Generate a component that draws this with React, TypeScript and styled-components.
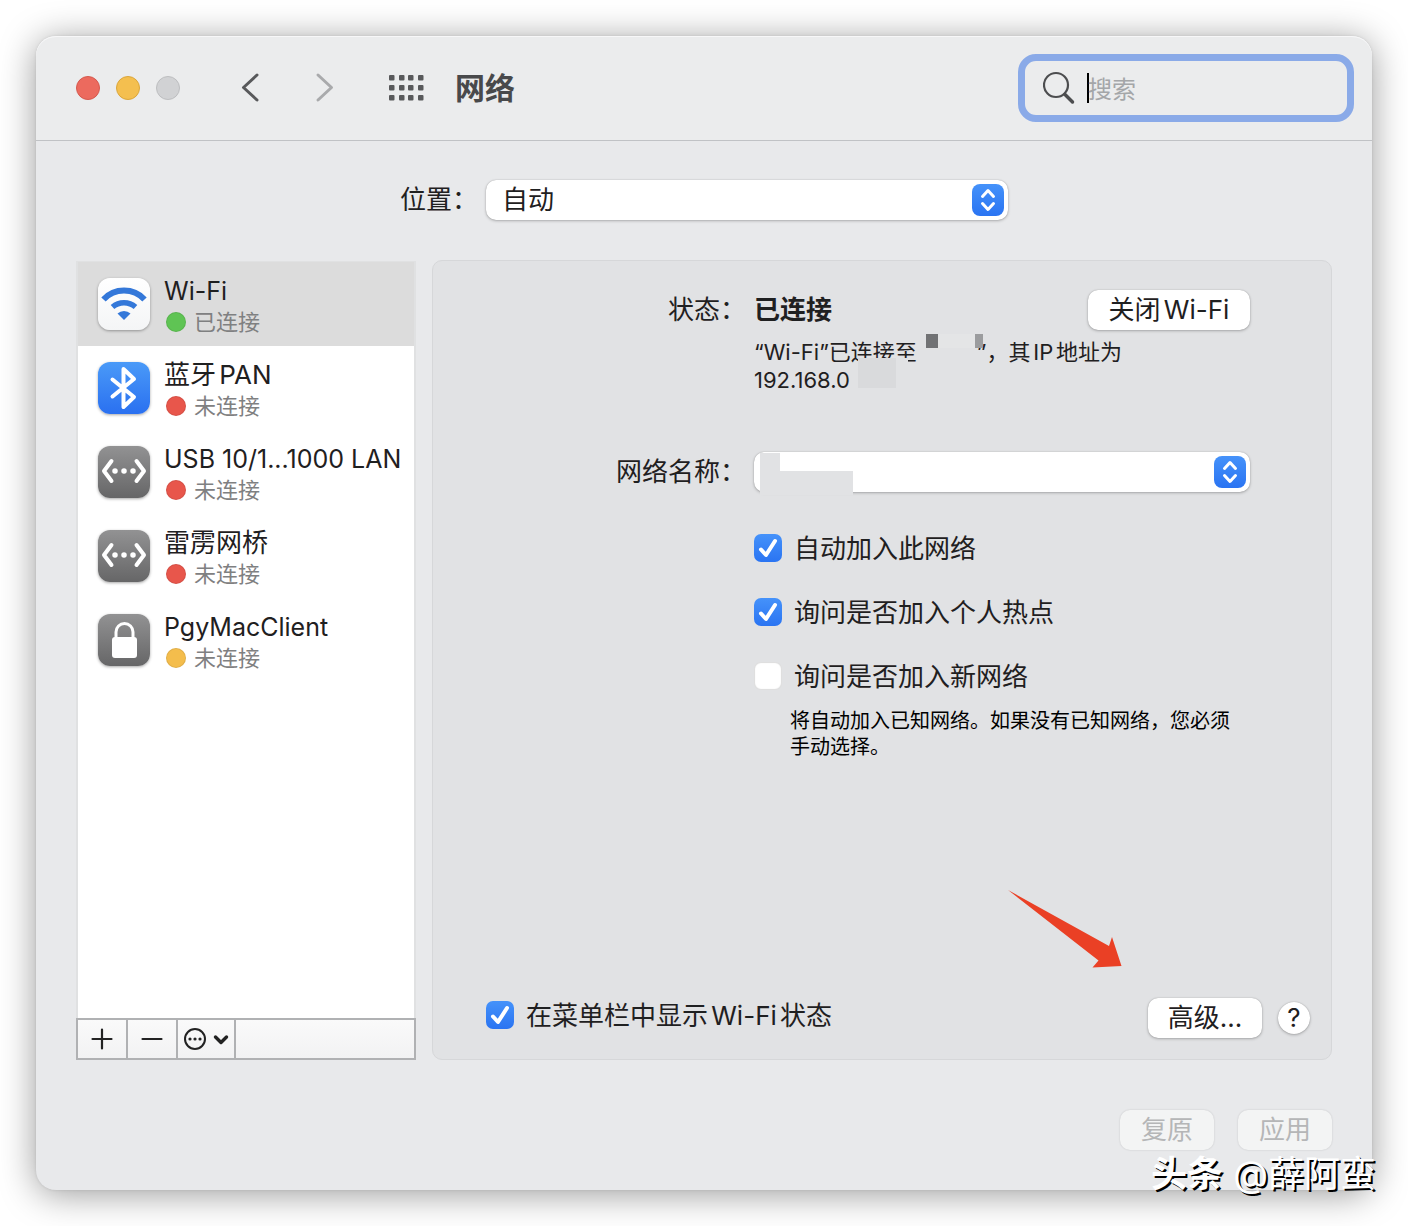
import React from "react";
import styled, { createGlobalStyle, css } from "styled-components";

const Global = createGlobalStyle`
  *, *::before, *::after { box-sizing: border-box; }
  body {
    margin: 0;
    background: #fff;
    color: #1f2021;
    font-family: Inter, "Noto Sans CJK SC", sans-serif;
    font-size: 26px;
    line-height: 36px;
    text-autospace: normal;
  }
  button, input, select { font: inherit; color: inherit; margin: 0; }
`;

const Page = styled.div`
  position: relative;
  padding: 36px;
`;

const Window = styled.main`
  border-radius: 20px;
  background: #e8e9eb;
  box-shadow: 0 0 3px rgba(0, 0, 0, 0.1), 0 4px 36px rgba(0, 0, 0, 0.4);
`;

const TitleBar = styled.header`
  display: flex;
  align-items: center;
  height: 105px;
  padding: 0 18px 0 40px;
  border-bottom: 1px solid #c0c2c5;
  border-radius: 20px 20px 0 0;
  background: #ebeced;
  box-shadow: inset 0 1px 0 #f7f7f8;
`;

const Lights = styled.div`
  display: flex;
  gap: 16px;
  margin-right: 60px;
`;

const Light = styled.button<{ $color: string; $edge: string }>`
  width: 24px;
  height: 24px;
  padding: 0;
  border: 1px solid ${(p) => p.$edge};
  border-radius: 50%;
  background: ${(p) => p.$color};
`;

const IconButton = styled.button<{ $color: string }>`
  display: flex;
  padding: 0;
  border: 0;
  background: none;
  color: ${(p) => p.$color};
`;

const NavButtons = styled.div`
  display: flex;
  gap: 55px;
  margin-right: 53px;
`;

const Title = styled.h1`
  margin: 0 auto 0 30px;
  font-size: 30px;
  font-weight: 700;
  color: #48494b;
`;

const SearchBox = styled.label`
  display: flex;
  align-items: center;
  gap: 12px;
  width: 336px;
  height: 68px;
  padding: 0 17px 0 18px;
  border: 7px solid #8aaae8;
  border-radius: 18px;
  color: #4c4d4f;
`;

const SearchInput = styled.input`
  flex: 1;
  min-width: 0;
  padding: 3px 0 0;
  border: 0;
  outline: 0;
  background: none;
  font-size: 24px;
  &::placeholder { color: #a4a6a8; opacity: 1; }
`;

const Caret = styled.span`
  width: 2px;
  height: 30px;
  margin-right: -13px;
  background: #000;
`;

const Body = styled.div`
  padding: 39px 40px 40px;
`;

const LocationRow = styled.div`
  display: flex;
  justify-content: center;
  align-items: center;
  gap: 8px;
  margin-bottom: 40px;
`;

const PopUp = styled.div<{ $width: string }>`
  position: relative;
  width: ${(p) => p.$width};
`;

const surface = css`
  background: #fff;
  border: 0;
  border-radius: 10px;
  box-shadow: 0 0 1px rgba(0, 0, 0, 0.3), 0 1px 3px rgba(0, 0, 0, 0.25);
`;

const Select = styled.select`
  ${surface}
  display: block;
  appearance: none;
  width: 100%;
  height: 40px;
  padding: 0 48px 0 16px;
`;

const Stepper = styled.span`
  position: absolute;
  top: 4px;
  right: 4px;
  display: flex;
  width: 32px;
  height: 32px;
  border-radius: 8px;
  background: linear-gradient(#4592fa, #2a74f2);
  pointer-events: none;
`;

const Columns = styled.div`
  display: flex;
  gap: 16px;
`;

const Sidebar = styled.aside`
  display: flex;
  flex-direction: column;
  flex: 0 0 340px;
  padding-top: 1px;
`;

const ServiceList = styled.ul`
  flex: 1;
  margin: 0;
  padding: 0;
  list-style: none;
  background: #fff;
  border: 1px solid #e0e1e2;
  border-width: 1px 2px 0;
`;

const Service = styled.li<{ $selected?: boolean }>`
  display: flex;
  gap: 14px;
  height: 84px;
  padding: 12px 0 0 20px;
  white-space: nowrap;
  background: ${(p) => (p.$selected ? "#dcdcdc" : "transparent")};
`;

const Tile = styled.span<{ $fill: string }>`
  display: flex;
  flex: none;
  width: 52px;
  height: 52px;
  margin-top: 4px;
  border-radius: 12px;
  background: ${(p) => p.$fill};
  box-shadow: 0 1px 3px rgba(0, 0, 0, 0.35);
`;

const ServiceName = styled.div`
  font-size: 25px;
  line-height: 34px;
  &:lang(zh) { font-size: 26px; }
`;

const ServiceState = styled.div`
  display: flex;
  align-items: center;
  gap: 8px;
  padding-left: 2px;
  font-size: 22px;
  line-height: 28px;
  color: #7f8081;
`;

const Dot = styled.span<{ $color: string }>`
  width: 20px;
  height: 20px;
  border: 1px solid rgba(0, 0, 0, 0.08);
  border-radius: 50%;
  background: ${(p) => p.$color};
`;

const ListTools = styled.div`
  display: flex;
  height: 42px;
  border: 2px solid #b0b1b3;
  background: linear-gradient(#fafafa, #f2f2f3);
`;

const ListTool = styled.button<{ $width: number }>`
  display: flex;
  align-items: center;
  justify-content: center;
  width: ${(p) => p.$width}px;
  padding: 0;
  border: 0;
  border-right: 2px solid #b0b1b3;
  background: none;
`;

const Panel = styled.section`
  position: relative;
  display: flex;
  flex-direction: column;
  flex: 1;
  min-width: 0;
  min-height: 800px;
  padding: 29px 21px 21px 20px;
  border: 1px solid #d6d7d9;
  border-radius: 10px;
  background: #e1e2e4;
`;

const Form = styled.div`
  display: grid;
  grid-template-columns: 293px 1fr;
  column-gap: 8px;
  padding-right: 60px;
`;

const FormLabel = styled.label`
  padding-top: 2px;
  text-align: right;
  white-space: nowrap;
`;

const StatusLine = styled.div`
  display: flex;
  justify-content: space-between;
  align-items: center;
`;

const PushButton = styled.button<{ $width: number }>`
  ${surface}
  width: ${(p) => p.$width}px;
  height: 40px;
  padding: 0;
  white-space: nowrap;
  &:disabled {
    background: #f3f4f4;
    color: #b5b6b7;
    box-shadow: 0 0 2px rgba(0, 0, 0, 0.16);
  }
`;

const StatusDetail = styled.p`
  position: relative;
  margin: 8px 0 58px;
  font-size: 22px;
  line-height: 28px;
`;

const HiddenName = styled.span`
  display: inline-block;
  width: 60px;
`;

const Mask = styled.span<{ $x: number; $y: number; $w: number; $h: number; $color: string }>`
  position: absolute;
  left: ${(p) => p.$x}px;
  top: ${(p) => p.$y}px;
  width: ${(p) => p.$w}px;
  height: ${(p) => p.$h}px;
  background: ${(p) => p.$color};
`;

const Options = styled.div`
  grid-column: 2;
  display: flex;
  flex-direction: column;
  gap: 30px;
  margin-top: 39px;
`;

const CheckLabel = styled.label`
  display: flex;
  align-items: center;
  gap: 12px;
  line-height: 32px;
  white-space: nowrap;
`;

const CheckText = styled.span`
  padding-top: 2px;
`;

const CheckBox = styled.span`
  position: relative;
  display: flex;
  width: 28px;
  height: 28px;
  svg { position: absolute; inset: 0; pointer-events: none; }
`;

const CheckInput = styled.input`
  appearance: none;
  width: 28px;
  height: 28px;
  border-radius: 7px;
  background: #fff;
  box-shadow: inset 0 0 1px 1px rgba(0, 0, 0, 0.14);
  &:checked {
    background: linear-gradient(#4592fa, #2a74f2);
    box-shadow: none;
  }
`;

const Hint = styled.p`
  grid-column: 2;
  margin: 15px 0 0 36px;
  padding-right: 10px;
  font-size: 20px;
  line-height: 26px;
  color: #000;
`;

const PanelFooter = styled.div`
  display: flex;
  align-items: flex-start;
  gap: 16px;
  margin-top: auto;
  padding-left: 33px;
`;

const FooterButtons = styled.div`
  display: flex;
  align-items: center;
  gap: 16px;
  margin-left: auto;
`;

const HelpButton = styled.button`
  ${surface}
  width: 32px;
  height: 32px;
  padding: 0;
  border-radius: 50%;
  line-height: 32px;
`;

const Arrow = styled.svg`
  position: absolute;
  right: 209px;
  bottom: 91px;
`;

const Actions = styled.footer`
  display: flex;
  justify-content: flex-end;
  gap: 24px;
  margin-top: 50px;
`;

const Watermark = styled.div`
  position: absolute;
  right: 32px;
  bottom: 30px;
  font-size: 36px;
  line-height: 44px;
  white-space: nowrap;
  color: #fff;
  text-shadow: 2px 2px 0 #000;
`;

const UpDown = () => (
  <Stepper>
    <svg width="32" height="32" viewBox="0 0 32 32" fill="none" stroke="#fff" strokeWidth="3" strokeLinecap="round" strokeLinejoin="round">
      <path d="M10.5 12.5 16 6.500l5.500 6M10.500 19.500l5.500 6 5.500-6" />
    </svg>
  </Stepper>
);

const Check = ({ label, checked }: { label: string; checked?: boolean }) => {
  const [on, setOn] = React.useState(!!checked);
  return (
    <CheckLabel>
      <CheckBox>
        <CheckInput type="checkbox" checked={on} onChange={() => setOn(!on)} />
        {on && (
          <svg width="28" height="28" viewBox="0 0 28 28" fill="none" stroke="#fff" strokeWidth="4" strokeLinecap="round" strokeLinejoin="round">
            <path d="M7 15.500l5 5.500L21 7" />
          </svg>
        )}
      </CheckBox>
      <CheckText>{label}</CheckText>
    </CheckLabel>
  );
};

const GREY = "linear-gradient(#929293, #666667)";

const WifiGlyph = () => (
  <svg width="52" height="52" viewBox="0 0 52 52" fill="none" stroke="#3478d9">
    <path d="M5.500 21.500a28 28 0 0 1 41 0" strokeWidth="6" />
    <path d="M14.500 29a17.500 17.500 0 0 1 23 0" strokeWidth="5.500" />
    <path d="M26 42l-6.500-6.500a9.500 9.500 0 0 1 13 0z" fill="#3478d9" stroke="none" />
  </svg>
);

const BluetoothGlyph = () => (
  <svg width="52" height="52" viewBox="0 0 52 52" fill="none" stroke="#fff" strokeWidth="4" strokeLinecap="round" strokeLinejoin="round">
    <path d="M14.500 17.500 36 35 25.500 45V7L36 17 14.500 34.500" />
  </svg>
);

const EthernetGlyph = () => (
  <svg width="52" height="52" viewBox="0 0 52 52" fill="none" stroke="#fff" strokeWidth="4" strokeLinecap="round" strokeLinejoin="round">
    <path d="M13.500 15 6 25l7.500 10M38.500 15 46 25l-7.500 10" />
    <path d="M17 25h.01M26 25h.01M35 25h.01" strokeWidth="5.500" />
  </svg>
);

const LockGlyph = () => (
  <svg width="52" height="52" viewBox="0 0 52 52" fill="none">
    <rect x="14" y="23" width="25" height="21" rx="3" fill="#fff" />
    <path d="M18 25v-7a8.500 8.500 0 0 1 17 0v7" stroke="#fff" strokeWidth="3" />
  </svg>
);

const services = [
  { name: "Wi-Fi", lang: "en", state: "已连接", color: "#5fc454", fill: "linear-gradient(#fff, #f4f5f6)", glyph: <WifiGlyph />, selected: true },
  { name: "蓝牙PAN", lang: "zh", state: "未连接", color: "#e8564b", fill: "linear-gradient(#4a9af8, #2a70f0)", glyph: <BluetoothGlyph /> },
  { name: "USB 10/1...1000 LAN", lang: "en", state: "未连接", color: "#e8564b", fill: GREY, glyph: <EthernetGlyph /> },
  { name: "雷雳网桥", lang: "zh", state: "未连接", color: "#e8564b", fill: GREY, glyph: <EthernetGlyph /> },
  { name: "PgyMacClient", lang: "en", state: "未连接", color: "#f4bd4c", fill: GREY, glyph: <LockGlyph /> },
];

export default function App() {
  return (
    <Page>
      <Global />
      <Window>
        <TitleBar>
          <Lights>
            <Light aria-label="关闭" $color="#ec6a5e" $edge="#d5594e" />
            <Light aria-label="最小化" $color="#f4bf4f" $edge="#dba63b" />
            <Light aria-label="缩放" $color="#d1d2d4" $edge="#bdbec0" />
          </Lights>
          <NavButtons>
            <IconButton aria-label="后退" $color="#58595b">
              <svg width="20" height="32" viewBox="0 0 20 32" fill="none" stroke="currentColor" strokeWidth="3" strokeLinecap="round" strokeLinejoin="round">
                <path d="M17 3 3.500 15.500 17 28" />
              </svg>
            </IconButton>
            <IconButton aria-label="前进" $color="#a9aaac">
              <svg width="20" height="32" viewBox="0 0 20 32" fill="none" stroke="currentColor" strokeWidth="3" strokeLinecap="round" strokeLinejoin="round">
                <path d="M3 3l13.500 12.500L3 28" />
              </svg>
            </IconButton>
          </NavButtons>
          <IconButton aria-label="显示全部" $color="#58595b">
            <svg width="37" height="26" viewBox="0 0 37 26" fill="currentColor">
              {[0, 10, 20].map((y) =>
                [1, 11, 20, 30].map((x) => <rect key={`${x}-${y}`} x={x} y={y} width="5.500" height="5.500" rx="1" />)
              )}
            </svg>
          </IconButton>
          <Title>网络</Title>
          <SearchBox>
            <svg width="32" height="34" viewBox="0 0 32 34" fill="none" stroke="currentColor" strokeLinecap="round">
              <circle cx="13" cy="14" r="12" strokeWidth="2.200" />
              <path d="M22 23.500l7.500 7.500" strokeWidth="3.500" />
            </svg>
            <Caret />
            <SearchInput type="search" aria-label="搜索" placeholder="搜索" />
          </SearchBox>
        </TitleBar>

        <Body>
          <LocationRow>
            <label htmlFor="location">位置：</label>
            <PopUp $width="522px">
              <Select id="location"><option>自动</option></Select>
              <UpDown />
            </PopUp>
          </LocationRow>

          <Columns>
            <Sidebar>
              <ServiceList>
                {services.map((s) => (
                  <Service key={s.name} $selected={s.selected}>
                    <Tile $fill={s.fill}>{s.glyph}</Tile>
                    <div>
                      <ServiceName lang={s.lang}>{s.name}</ServiceName>
                      <ServiceState><Dot $color={s.color} />{s.state}</ServiceState>
                    </div>
                  </Service>
                ))}
              </ServiceList>
              <ListTools>
                <ListTool $width={50} aria-label="添加">
                  <svg width="22" height="22" viewBox="0 0 22 22" stroke="#222" strokeWidth="2.200" strokeLinecap="round"><path d="M1.500 11h19M11 1.500v19" /></svg>
                </ListTool>
                <ListTool $width={50} aria-label="移除">
                  <svg width="22" height="22" viewBox="0 0 22 22" stroke="#222" strokeWidth="2.200" strokeLinecap="round"><path d="M1.500 11h19" /></svg>
                </ListTool>
                <ListTool $width={58} aria-label="更多">
                  <svg width="46" height="24" viewBox="0 0 46 24" fill="none" stroke="#222" strokeLinecap="round" strokeLinejoin="round">
                    <circle cx="12" cy="12" r="10" strokeWidth="2" />
                    <path d="M7 12h.01M12 12h.01M17 12h.01" strokeWidth="3.200" />
                    <path d="M32.500 10l5.500 5.500 5.500-5.500" strokeWidth="3.400" />
                  </svg>
                </ListTool>
              </ListTools>
            </Sidebar>

            <Panel>
              <Form>
                <FormLabel as="span">状态：</FormLabel>
                <div>
                  <StatusLine>
                    <strong>已连接</strong>
                    <PushButton $width={162}>关闭Wi-Fi</PushButton>
                  </StatusLine>
                  <StatusDetail>
                    “Wi-Fi”已连接至<HiddenName />”，其IP地址为<br />
                    192.168.0
                    <Mask $x={104} $y={20} $w={50} $h={30} $color="#e1e2e4" />
                    <Mask $x={104} $y={20} $w={38} $h={30} $color="#d9dadc" />
                    <Mask $x={172} $y={-4} $w={12} $h={14} $color="#717274" />
                    <Mask $x={184} $y={-4} $w={38} $h={14} $color="#e4e5e6" />
                    <Mask $x={221} $y={-4} $w={8} $h={14} $color="#9b9c9e" />
                  </StatusDetail>
                </div>

                <FormLabel htmlFor="network">网络名称：</FormLabel>
                <PopUp $width="100%">
                  <Select id="network"><option aria-label="当前网络"></option></Select>
                  <UpDown />
                  <Mask $x={6} $y={1} $w={20} $h={42} $color="#e1e2e4" />
                  <Mask $x={6} $y={19} $w={93} $h={24} $color="#e1e2e4" />
                </PopUp>

                <Options>
                  <Check label="自动加入此网络" checked />
                  <Check label="询问是否加入个人热点" checked />
                  <Check label="询问是否加入新网络" />
                </Options>
                <Hint>将自动加入已知网络。如果没有已知网络，您必须手动选择。</Hint>
              </Form>

              <PanelFooter>
                <Check label="在菜单栏中显示Wi-Fi状态" checked />
                <FooterButtons>
                  <PushButton $width={114}>高级...</PushButton>
                  <HelpButton aria-label="帮助">?</HelpButton>
                </FooterButtons>
              </PanelFooter>

              <Arrow width="114" height="78" viewBox="0 0 114 78" fill="#ea4025">
                <path d="M0 0 101 56l3-9 9.500 29-29 1.500 6-7z" />
              </Arrow>
            </Panel>
          </Columns>

          <Actions>
            <PushButton $width={94} disabled>复原</PushButton>
            <PushButton $width={94} disabled>应用</PushButton>
          </Actions>
        </Body>
      </Window>
      <Watermark><b>头条</b> @薛阿蛮</Watermark>
    </Page>
  );
}
